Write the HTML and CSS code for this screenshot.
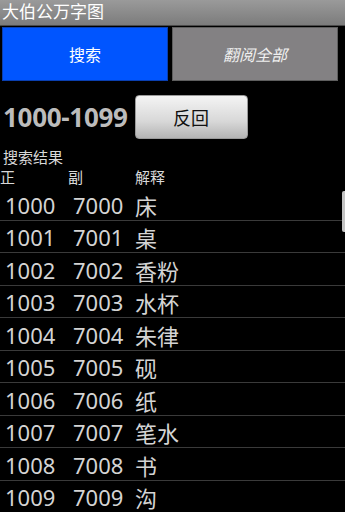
FILE: index.html
```html
<!DOCTYPE html>
<html>
<head>
<meta charset="utf-8">
<link rel="stylesheet" href="styles.css">
</head>
<body>
<div class="titlebar">大伯公万字图</div>
<div class="tabs">
  <div class="tab tab-active">搜索</div>
  <div class="tab tab-browse">翻阅全部</div>
</div>
<div class="rangebar">
  <div class="range">1000-1099</div>
  <div class="backbtn">反回</div>
</div>
<div class="caption">搜索结果</div>
<div class="colhead">
  <span class="c1">正</span><span class="c2">副</span><span class="c3">解释</span>
</div>
<div class="list">
  <div class="scrollbar"></div>
  <div class="row"><span class="n1">1000</span><span class="n2">7000</span><span class="n3">床</span></div>
  <div class="row"><span class="n1">1001</span><span class="n2">7001</span><span class="n3">桌</span></div>
  <div class="row"><span class="n1">1002</span><span class="n2">7002</span><span class="n3">香粉</span></div>
  <div class="row"><span class="n1">1003</span><span class="n2">7003</span><span class="n3">水杯</span></div>
  <div class="row"><span class="n1">1004</span><span class="n2">7004</span><span class="n3">朱律</span></div>
  <div class="row"><span class="n1">1005</span><span class="n2">7005</span><span class="n3">砚</span></div>
  <div class="row"><span class="n1">1006</span><span class="n2">7006</span><span class="n3">纸</span></div>
  <div class="row"><span class="n1">1007</span><span class="n2">7007</span><span class="n3">笔水</span></div>
  <div class="row"><span class="n1">1008</span><span class="n2">7008</span><span class="n3">书</span></div>
  <div class="row"><span class="n1">1009</span><span class="n2">7009</span><span class="n3">沟</span></div>
</div>
</body>
</html>
```
FILE: styles.css
```css
html, body {
  margin: 0;
  padding: 0;
  background: #000;
  width: 345px;
  height: 512px;
  overflow: hidden;
  font-family: "Noto Sans", "Noto Sans CJK SC", sans-serif;
  color: #d2d2d2;
}
.titlebar {
  height: 25px;
  line-height: 24px;
  padding-left: 2px;
  font-size: 17px;
  color: #fff;
  background: linear-gradient(#9a9a9a, #7c7c7c);
  border-bottom: 1px solid #4a4a4a;
}
.tabs {
  display: flex;
  gap: 4px;
  padding: 1px 7px 0 2px;
  height: 54px;
}
.tab {
  flex: 1;
  display: flex;
  align-items: center;
  justify-content: center;
  font-size: 16px;
  color: #fff;
  box-sizing: border-box;
}
.tab-active {
  background: #0055ff;
  border: 1px solid #0a3fb0;
}
.tab-browse {
  background: #838183;
  border: 1px solid #5e5e5e;
  font-style: italic;
  color: #f0f0f0;
}
.rangebar {
  display: flex;
  align-items: center;
  gap: 7px;
  margin-top: 13px;
  padding-left: 3px;
  height: 45px;
}
.range {
  font-size: 26px;
  font-weight: bold;
  color: #bcbcbc;
  letter-spacing: -0.3px;
}
.backbtn {
  width: 113px;
  height: 44px;
  border-radius: 4px;
  background: linear-gradient(#f4f4f4, #d8d8d8 60%, #b4b4b4);
  color: #111;
  font-size: 18px;
  display: flex;
  align-items: center;
  justify-content: center;
  box-sizing: border-box;
  border: 1px solid #9a9a9a;
}
.caption {
  margin-top: 8px;
  padding-left: 3px;
  font-size: 15px;
  line-height: 20px;
  height: 20px;
  color: #d8d8d8;
}
.colhead {
  display: flex;
  font-size: 15px;
  line-height: 21px;
  height: 21px;
  color: #d8d8d8;
}
.colhead .c1 { width: 68px; }
.colhead .c2 { width: 67px; }
.list {
  position: relative;
}
.scrollbar {
  position: absolute;
  right: 0;
  top: 3px;
  width: 3px;
  height: 41px;
  background: #c4c4c4;
  border-radius: 2px 0 0 2px;
}
.row {
  height: 32.5px;
  box-sizing: border-box;
  border-bottom: 1px solid #3a3a3a;
  display: flex;
  align-items: center;
  font-size: 22px;
  color: #d4d4d4;
  padding-left: 5px;
  padding-top: 2px;
}
.row .n1 { width: 68px; }
.row .n2 { width: 62px; }
```
